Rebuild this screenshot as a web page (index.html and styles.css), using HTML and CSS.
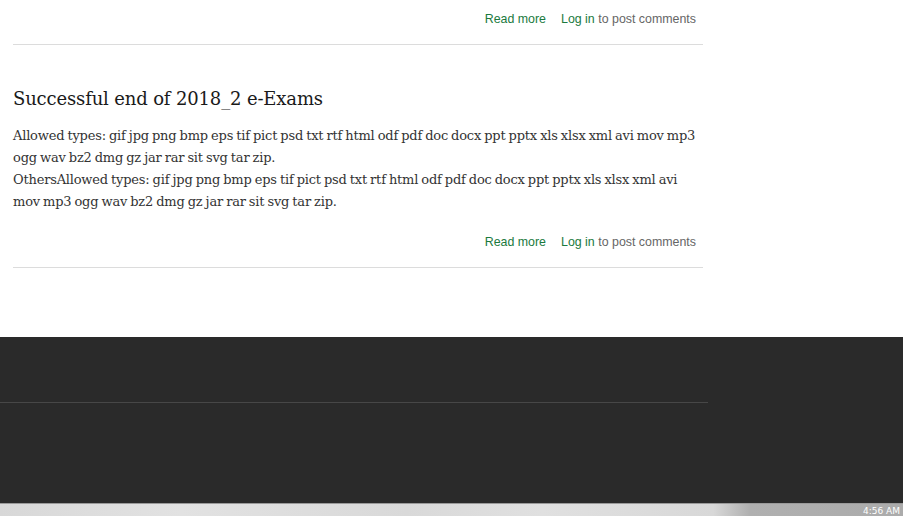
FILE: index.html
```html
<!DOCTYPE html>
<html>
<head>
<meta charset="utf-8">
<link rel="stylesheet" href="styles.css">
</head>
<body>
<div class="page">
  <main class="content">
    <article class="node node-first">
      <ul class="links">
        <li><a class="link" href="#">Read more</a></li>
        <li><a class="link" href="#">Log in</a> to post comments</li>
      </ul>
    </article>
    <article class="node">
      <h2 class="node-title">Successful end of 2018_2 e-Exams</h2>
      <div class="node-body">
        <p>Allowed types: gif jpg png bmp eps tif pict psd txt rtf html odf pdf doc docx ppt pptx xls xlsx xml avi mov mp3 ogg wav bz2 dmg gz jar rar sit svg tar zip.<br>OthersAllowed types: gif jpg png bmp eps tif pict psd txt rtf html odf pdf doc docx ppt pptx xls xlsx xml avi mov mp3 ogg wav bz2 dmg gz jar rar sit svg tar zip.</p>
      </div>
      <ul class="links">
        <li><a class="link" href="#">Read more</a></li>
        <li><a class="link" href="#">Log in</a> to post comments</li>
      </ul>
    </article>
  </main>
  <footer class="footer">
    <div class="footer-top"></div>
    <div class="footer-bottom"></div>
  </footer>
  <div class="taskbar">
    <div class="taskbar-clock">4:56 AM</div>
  </div>
</div>
</body>
</html>
```
FILE: styles.css
```css
html, body {
  margin: 0;
  padding: 0;
  background: #fff;
}
.page {
  width: 903px;
  height: 516px;
  overflow: hidden;
  display: flex;
  flex-direction: column;
}
.content {
  width: 690px;
  margin-left: 13px;
  height: 337px;
  flex: none;
}
.node {
  border-bottom: 1px solid #dcdcdc;
}
.node-first {
  padding-top: 10px;
}
.node + .node {
  margin-top: 42px;
}
.node-title {
  margin: 0;
  font-family: Georgia, "DejaVu Serif", serif;
  font-weight: normal;
  font-size: 18px;
  letter-spacing: -0.15px;
  line-height: 24px;
  color: #1a1a1a;
}
.node-body p {
  margin: 14px 0 0;
  font-family: Georgia, "DejaVu Serif", serif;
  font-size: 13px;
  letter-spacing: -0.2px;
  word-spacing: -0.8px;
  line-height: 22px;
  color: #333;
}
.links {
  list-style: none;
  margin: 0;
  padding: 0 7px 16px 0;
  display: flex;
  justify-content: flex-end;
  gap: 15px;
  font-family: Arial, "Liberation Sans", sans-serif;
  font-size: 12.4px;
  line-height: 18px;
  color: #666;
}
.node-body + .links {
  margin-top: 20px;
}
.link {
  color: #1b7a3e;
  text-decoration: none;
}
.footer {
  flex: none;
  height: 166px;
  background: #2a2a2a;
  display: flex;
  flex-direction: column;
}
.footer-top {
  width: 708px;
  height: 65px;
  border-bottom: 1px solid #474747;
}
.taskbar {
  flex: none;
  height: 12px;
  border-top: 1px solid #9a9a9a;
  background: linear-gradient(90deg, #d8d8d8 0%, #e2e2e2 20%, #d9d9d9 45%, #e0e0e0 60%, #d8d8d8 79%, #b0b0b0 83%, #ababab 100%);
  display: flex;
  justify-content: flex-end;
  overflow: hidden;
}
.taskbar-clock {
  font-family: "DejaVu Sans", sans-serif;
  font-size: 9px;
  line-height: 9px;
  padding: 3px 3px 0 0;
  color: #fff;
}
```
